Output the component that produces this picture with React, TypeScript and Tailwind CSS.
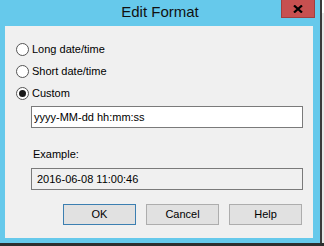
const options = [
  { label: "Long date/time", checked: false },
  { label: "Short date/time", checked: false },
  { label: "Custom", checked: true },
];

const buttons = ["OK", "Cancel", "Help"];

function Radio({ checked }: { checked: boolean }) {
  return (
    <span className="w-[13px] h-[13px] rounded-full border border-[#555] bg-white flex items-center justify-center shrink-0">
      {checked && <span className="w-[7px] h-[7px] rounded-full bg-[#1a1a1a]" />}
    </span>
  );
}

export default function App() {
  return (
    <div className="w-[324px] h-[246px] flex flex-col bg-[#2e2e2e] overflow-hidden font-['Liberation_Sans',Arial,sans-serif] text-[11px] text-black">
      <div className="flex h-[243px]">
        <div className="relative w-[320px] h-full bg-[#66c9eb] flex flex-col">
          {/* title bar */}
          <div className="h-[26px] pt-[3px] text-center text-[15px] leading-[17px] text-[#111]">
            Edit Format
          </div>
          <button className="absolute left-[281px] top-0 w-[34px] h-[18px] bg-[#c75050] border border-t-0 border-[#a03f3f] flex items-center justify-center">
            <svg width="10" height="8" viewBox="0 0 10 8">
              <path d="M1 0.5 L9 7.5 M9 0.5 L1 7.5" stroke="#000" strokeWidth="2.2" />
            </svg>
          </button>

          {/* content */}
          <div className="ml-[5px] w-[308px] h-[212px] bg-[#f0f0f0] flex flex-col pt-[12px]">
            {options.map((o) => (
              <div key={o.label} className="h-[22px] flex items-center pl-[11px] gap-[3px]">
                <Radio checked={o.checked} />
                <span className="leading-[13px]">{o.label}</span>
              </div>
            ))}

            <div className="ml-[26px] mt-[2px] w-[272px] h-[22px] border border-[#7a7a7a] bg-white flex items-center pl-[2px]">
              yyyy-MM-dd hh:mm:ss
            </div>

            <div className="ml-[28px] mt-[20px] h-[13px] leading-[13px]">Example:</div>

            <div className="ml-[26px] mt-[7px] w-[272px] h-[22px] border border-[#7a7a7a] bg-[#f0f0f0] flex items-center pl-[5px]">
              2016-06-08 11:00:46
            </div>

            <div className="ml-[58px] mt-[14px] flex gap-[10px]">
              {buttons.map((b) => (
                <button
                  key={b}
                  className={
                    b === "OK"
                      ? "w-[73px] h-[21px] bg-[#e1e1e1] border border-[#3c7fb1] text-[11px]"
                      : "w-[73px] h-[21px] bg-[#e1e1e1] border border-[#adadad] text-[11px]"
                  }
                >
                  {b}
                </button>
              ))}
            </div>
          </div>
        </div>
        <div className="w-[2px] h-full bg-[#3a3a3a]" />
        <div className="w-[2px] h-full flex flex-col">
          <div className="h-[13px] bg-white" />
          <div className="flex-1 bg-[#e6e6e6]" />
        </div>
      </div>
    </div>
  );
}
